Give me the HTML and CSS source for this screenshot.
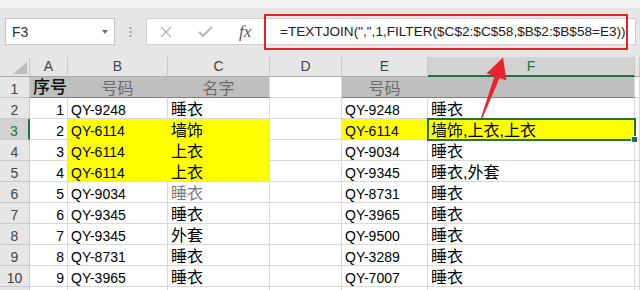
FILE: index.html
```html
<!DOCTYPE html>
<html>
<head>
<meta charset="utf-8">
<link rel="stylesheet" href="styles.css">
</head>
<body>
<div class="app">
  <div class="ribbon"></div>
  <div class="fbar">
    <div class="namebox"><span>F3</span><i class="caret"></i></div>
    <div class="grip"></div>
    <div class="fx-box">
      <div class="fx-icons">
        <svg class="ic-x" width="12" height="12" viewBox="0 0 12 12"><path d="M1 1 L11 11 M11 1 L1 11" stroke="#b3b3b3" stroke-width="1.4" fill="none"/></svg>
        <svg class="ic-ok" width="15" height="11" viewBox="0 0 15 11"><path d="M1 6 L5 10 L14 1" stroke="#b3b3b3" stroke-width="1.8" fill="none"/></svg>
        <span class="ic-fx">fx</span>
      </div>
      <div class="fx-input">=TEXTJOIN(",",1,FILTER($C$2:$C$58,$B$2:$B$58=E3))</div>
    </div>
  </div>
  <div class="sheet">
    <div class="corner"><i class="tri"></i></div>
    <div class="ch">A</div><div class="ch">B</div><div class="ch">C</div><div class="ch">D</div><div class="ch">E</div><div class="ch sel">F</div><div class="ch"></div>

    <div class="rh">1</div>
    <div class="c g b">序号</div><div class="c g cj">号码</div><div class="c g cj gl">名字</div><div class="c"></div><div class="c g cj">号码</div><div class="c g gl"></div><div class="c e"></div>

    <div class="rh">2</div>
    <div class="c n">1</div><div class="c">QY-9248</div><div class="c cj">睡衣</div><div class="c"></div><div class="c">QY-9248</div><div class="c cj">睡衣</div><div class="c e"></div>

    <div class="rh sel">3</div>
    <div class="c n">2</div><div class="c y yr yb">QY-6114</div><div class="c y yb cj">墙饰</div><div class="c"></div><div class="c y">QY-6114</div><div class="c y cj cur">墙饰,上衣,上衣</div><div class="c e"></div>

    <div class="rh">4</div>
    <div class="c n">3</div><div class="c y yr yb">QY-6114</div><div class="c y yb cj">上衣</div><div class="c"></div><div class="c">QY-9034</div><div class="c cj">睡衣</div><div class="c e"></div>

    <div class="rh">5</div>
    <div class="c n">4</div><div class="c y yr">QY-6114</div><div class="c y cj">上衣</div><div class="c"></div><div class="c">QY-9345</div><div class="c cj">睡衣,外套</div><div class="c e"></div>

    <div class="rh">6</div>
    <div class="c n">5</div><div class="c">QY-9034</div><div class="c cj dim">睡衣</div><div class="c"></div><div class="c">QY-8731</div><div class="c cj">睡衣</div><div class="c e"></div>

    <div class="rh">7</div>
    <div class="c n">6</div><div class="c">QY-9345</div><div class="c cj">睡衣</div><div class="c"></div><div class="c">QY-3965</div><div class="c cj">睡衣</div><div class="c e"></div>

    <div class="rh">8</div>
    <div class="c n">7</div><div class="c">QY-9345</div><div class="c cj">外套</div><div class="c"></div><div class="c">QY-9500</div><div class="c cj">睡衣</div><div class="c e"></div>

    <div class="rh">9</div>
    <div class="c n">8</div><div class="c">QY-8731</div><div class="c cj">睡衣</div><div class="c"></div><div class="c">QY-3289</div><div class="c cj">睡衣</div><div class="c e"></div>

    <div class="rh">10</div>
    <div class="c n">9</div><div class="c">QY-3965</div><div class="c cj">睡衣</div><div class="c"></div><div class="c">QY-7007</div><div class="c cj">睡衣</div><div class="c e"></div>

    <div class="rh"></div>
    <div class="c"></div><div class="c"></div><div class="c"></div><div class="c"></div><div class="c"></div><div class="c"></div><div class="c e"></div>
  </div>
  <svg class="arrow" width="640" height="290" viewBox="0 0 640 290">
    <polygon points="503,57.5 506.5,80.5 499.6,78 481.8,119.5 480.6,119 494.6,76 486.5,73.5" fill="#e8232d"/>
  </svg>
</div>
</body>
</html>
```

FILE: styles.css
```css
html, body {
  margin: 0;
  padding: 0;
}
body {
  width: 640px;
  height: 290px;
  overflow: hidden;
  background: #ffffff;
  font-family: "Liberation Sans", "Noto Sans CJK SC", sans-serif;
}
.app {
  position: relative;
  width: 640px;
  height: 290px;
  overflow: hidden;
}
.ribbon {
  height: 8px;
  background: #f3f3f3;
}
.fbar {
  height: 49px;
  box-sizing: border-box;
  padding-top: 10px;
  background: #e6e6e6;
  display: flex;
  align-items: flex-start;
}
.namebox {
  margin-left: 5px;
  width: 110px;
  height: 27px;
  box-sizing: border-box;
  background: #ffffff;
  border: 1px solid #c6c6c6;
  display: flex;
  align-items: center;
  justify-content: space-between;
  padding: 0 6px 0 6px;
  font-size: 14px;
  color: #333333;
}
.caret {
  width: 0;
  height: 0;
  border-left: 3.5px solid transparent;
  border-right: 3.5px solid transparent;
  border-top: 4px solid #6a6a6a;
}
.grip {
  margin-left: 14px;
  margin-top: 8px;
  width: 3px;
  height: 12px;
  background: radial-gradient(circle, #a6a6a6 1px, transparent 1.3px) 0 0 / 3px 4px;
}
.fx-box {
  margin-left: 14px;
  margin-right: 4px;
  flex: 1;
  height: 27px;
  box-sizing: border-box;
  background: #ffffff;
  border: 1px solid #d0d0d0;
  display: flex;
}
.fx-icons {
  width: 117px;
  display: flex;
  align-items: center;
}
.ic-x {
  margin-left: 13px;
}
.ic-ok {
  margin-left: 26px;
}
.ic-fx {
  margin-left: 26px;
  font-family: "Liberation Serif", serif;
  font-style: italic;
  font-size: 17px;
  color: #555555;
  line-height: 25px;
}
.fx-input {
  flex: 1;
  position: relative;
  padding-left: 16px;
  font-size: 13.6px;
  line-height: 25px;
  color: #222222;
  white-space: nowrap;
}
.fx-input::after {
  content: "";
  position: absolute;
  left: 0;
  right: 7px;
  top: -5px;
  bottom: -6px;
  border: 2px solid #e3202a;
}

.sheet {
  display: grid;
  grid-template-columns: 30px 38px 100px 102px 72px 86px 207px 5px;
  grid-template-rows: 20px repeat(11, 21px);
}
.sheet > div {
  box-sizing: border-box;
}
.corner {
  background: #e6e6e6;
  border-right: 1px solid #c8c8c8;
  border-bottom: 1px solid #ababab;
}
.tri {
  display: block;
  width: 14px;
  height: 12px;
  margin: 5px 0 0 13px;
  background: #bdbdbd;
  clip-path: polygon(100% 0, 100% 100%, 0 100%);
}
.ch {
  background: #e6e6e6;
  border-right: 1px solid #c8c8c8;
  border-bottom: 1px solid #ababab;
  text-align: center;
  font-size: 14px;
  line-height: 19px;
  color: #444444;
}
.ch.sel {
  background: #d2d2d2;
  color: #217346;
  border-bottom: 2px solid #217346;
}
.rh {
  background: #e6e6e6;
  border-right: 1px solid #c8c8c8;
  border-bottom: 1px solid #c8c8c8;
  text-align: center;
  font-size: 14px;
  line-height: 16px;
  padding-top: 4px;
  color: #444444;
}
.rh.sel {
  background: #d2d2d2;
  color: #217346;
  border-right: 2px solid #217346;
}
.c {
  border-right: 1px solid #d9d9d9;
  border-bottom: 1px solid #d9d9d9;
  font-size: 14px;
  line-height: 16px;
  padding: 4px 3px 0 3px;
  white-space: nowrap;
  overflow: hidden;
  color: #000000;
}
.c.e {
  padding: 0;
}
.cj {
  font-size: 16px;
  line-height: 16px;
}
.n {
  text-align: right;
}
.g {
  background: #bfbfbf;
  border-bottom-color: #7f7f7f;
  border-right-color: #bfbfbf;
  color: #6b6b6b;
  text-align: center;
}
.g.gl {
  border-right-color: #d9d9d9;
}
.g.b {
  color: #111111;
  font-size: 17px;
  font-weight: 500;
  text-align: right;
  padding-right: 2px;
  padding-top: 3px;
}
.y {
  background: #ffff00;
}
.yr {
  border-right-color: #ffff00;
}
.yb {
  border-bottom-color: #ffff00;
}
.dim {
  color: #7a7a7a;
}
.cur {
  position: relative;
  overflow: visible;
  z-index: 2;
  outline: 2px solid #217346;
  outline-offset: -1px;
}
.cur::after {
  content: "";
  position: absolute;
  right: -4px;
  bottom: -4px;
  width: 5px;
  height: 5px;
  background: #217346;
  border: 1px solid #ffffff;
}
.arrow {
  position: absolute;
  left: 0;
  top: 0;
  pointer-events: none;
}
```
